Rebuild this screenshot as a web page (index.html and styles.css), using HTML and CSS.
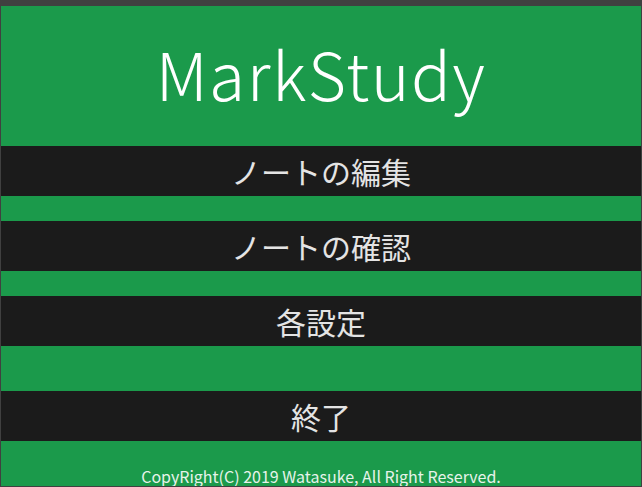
FILE: index.html
```html
<!DOCTYPE html>
<html lang="ja">
<head>
<meta charset="utf-8">
<title>MarkStudy</title>
<link rel="stylesheet" href="styles.css">
</head>
<body>
<div class="frame">
  <header class="title">MarkStudy</header>
  <nav class="menu">
    <div class="item">ノートの編集</div>
    <div class="item">ノートの確認</div>
    <div class="item">各設定</div>
    <div class="item exit">終了</div>
  </nav>
  <footer class="footer">CopyRight(C) 2019 Watasuke, All Right Reserved.</footer>
</div>
</body>
</html>
```
FILE: styles.css
```css
html, body {
  margin: 0;
  padding: 0;
  background: #404040;
}
.frame {
  box-sizing: border-box;
  width: 642px;
  height: 487px;
  border-top: 6px solid #404040;
  border-left: 1px solid #404040;
  border-right: 1px solid #404040;
  border-bottom: 1px solid #404040;
  background: #1b9a4b;
  display: flex;
  flex-direction: column;
  font-family: "Noto Sans CJK JP", "Noto Sans", sans-serif;
  overflow: hidden;
}
.title {
  box-sizing: border-box;
  height: 140px;
  padding-bottom: 8px;
  display: flex;
  align-items: center;
  justify-content: center;
  color: #ffffff;
  font-size: 66px;
  font-weight: 300;
  letter-spacing: 1.5px;
  line-height: 1;
}
.menu {
  display: flex;
  flex-direction: column;
  gap: 25px;
}
.item {
  height: 50px;
  background: #1b1b1b;
  color: #e4e4e4;
  font-size: 30px;
  display: flex;
  align-items: center;
  justify-content: center;
  line-height: 1;
}
.item.exit {
  margin-top: 20px;
}
.footer {
  flex: 1;
  display: flex;
  align-items: flex-end;
  justify-content: center;
  padding-bottom: 2px;
  color: #e6f3ea;
  font-size: 16px;
  line-height: 1;
}
```
